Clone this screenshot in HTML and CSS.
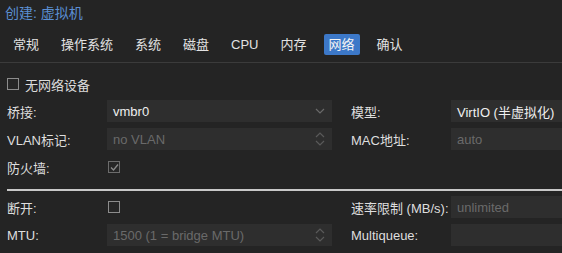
FILE: index.html
```html
<!DOCTYPE html>
<html lang="zh">
<head>
    <meta charset="UTF-8">
    <title>创建: 虚拟机</title>
    <link rel="stylesheet" href="styles.css">
</head>
<body>
<div class="window">
    <div class="title">创建: 虚拟机</div>
    <ul class="tabs">
        <li>常规</li>
        <li>操作系统</li>
        <li>系统</li>
        <li>磁盘</li>
        <li>CPU</li>
        <li>内存</li>
        <li class="active">网络</li>
        <li>确认</li>
    </ul>
    <div class="panel">
        <div class="check-row">
            <span class="checkbox"></span>
            <span>无网络设备</span>
        </div>

        <div class="form-grid">
            <div class="label">桥接:</div>
            <div class="field">
                <span class="value">vmbr0</span>
                <svg class="trigger" width="10" height="6" viewBox="0 0 10 6"><polyline points="1,1 5,5 9,1" fill="none" stroke="#6a6a6a" stroke-width="1.2"/></svg>
            </div>
            <div class="label right">模型:</div>
            <div class="field">
                <span class="value">VirtIO (半虚拟化)</span>
            </div>

            <div class="label">VLAN标记:</div>
            <div class="field">
                <span class="placeholder">no VLAN</span>
                <svg class="trigger" width="10" height="14" viewBox="0 0 10 14"><polyline points="1,5 5,1 9,5" fill="none" stroke="#5a5a5a" stroke-width="1.2"/><polyline points="1,9 5,13 9,9" fill="none" stroke="#5a5a5a" stroke-width="1.2"/></svg>
            </div>
            <div class="label right">MAC地址:</div>
            <div class="field">
                <span class="placeholder">auto</span>
            </div>

            <div class="label">防火墙:</div>
            <div class="box-cell">
                <span class="checkbox checked">
                    <svg width="9" height="9" viewBox="0 0 9 9"><polyline points="1,4.5 3.5,7 8,1.5" fill="none" stroke="#8a8a8a" stroke-width="1.3"/></svg>
                </span>
            </div>
        </div>

        <div class="divider"></div>

        <div class="form-grid">
            <div class="label">断开:</div>
            <div class="box-cell">
                <span class="checkbox"></span>
            </div>
            <div class="label right">速率限制 (MB/s):</div>
            <div class="field">
                <span class="placeholder">unlimited</span>
            </div>

            <div class="label">MTU:</div>
            <div class="field">
                <span class="placeholder">1500 (1 = bridge MTU)</span>
                <svg class="trigger" width="10" height="14" viewBox="0 0 10 14"><polyline points="1,5 5,1 9,5" fill="none" stroke="#5a5a5a" stroke-width="1.2"/><polyline points="1,9 5,13 9,9" fill="none" stroke="#5a5a5a" stroke-width="1.2"/></svg>
            </div>
            <div class="label right">Multiqueue:</div>
            <div class="field"></div>
        </div>
    </div>
</div>
</body>
</html>
```

FILE: styles.css
```css
body {
    margin: 0;
    background-color: #242424;
    color: #dcdcdc;
    font-family: "Liberation Sans", "Noto Sans CJK SC", sans-serif;
    font-size: 13px;
    overflow: hidden;
}
.window {
    width: 720px;
}
.title {
    padding: 4px 5px 0;
    line-height: 18px;
    font-size: 14px;
    color: #5b8fd2;
}
.tabs {
    list-style: none;
    margin: 0;
    padding: 12px 0 7px 8px;
    display: flex;
    gap: 12px;
    border-bottom: 1px solid #3b3b3b;
}
.tabs li {
    padding: 2px 5px;
    line-height: 17px;
    border-radius: 2px;
    color: #e2e2e2;
}
.tabs li.active {
    background-color: #3c78c8;
    color: #f4f4f4;
}
.panel {
    padding: 10px 0 0 7px;
}
.check-row {
    display: flex;
    align-items: center;
    gap: 6px;
    height: 22px;
    margin-bottom: 5px;
}
.checkbox {
    display: inline-flex;
    align-items: center;
    justify-content: center;
    width: 10px;
    height: 10px;
    border: 1px solid #8c8c8c;
    background-color: #262626;
}
.checkbox.checked {
    border-color: #6c6c6c;
}
.form-grid {
    display: grid;
    grid-template-columns: 100px 225px 119px 225px;
    grid-auto-rows: 22px;
    row-gap: 6px;
}
.label {
    display: flex;
    align-items: center;
    color: #dedede;
}
.label.right {
    padding-left: 19px;
}
.field {
    display: flex;
    align-items: center;
    justify-content: space-between;
    padding: 0 7px 0 6px;
    background-color: #2e2e2e;
}
.value {
    color: #f0f0f0;
}
.placeholder {
    color: #6a6a6a;
}
.box-cell {
    display: flex;
    align-items: center;
    padding-left: 1px;
}
.divider {
    height: 2px;
    margin: 11px 0 5px;
    background-color: #c8c8c8;
}
```
